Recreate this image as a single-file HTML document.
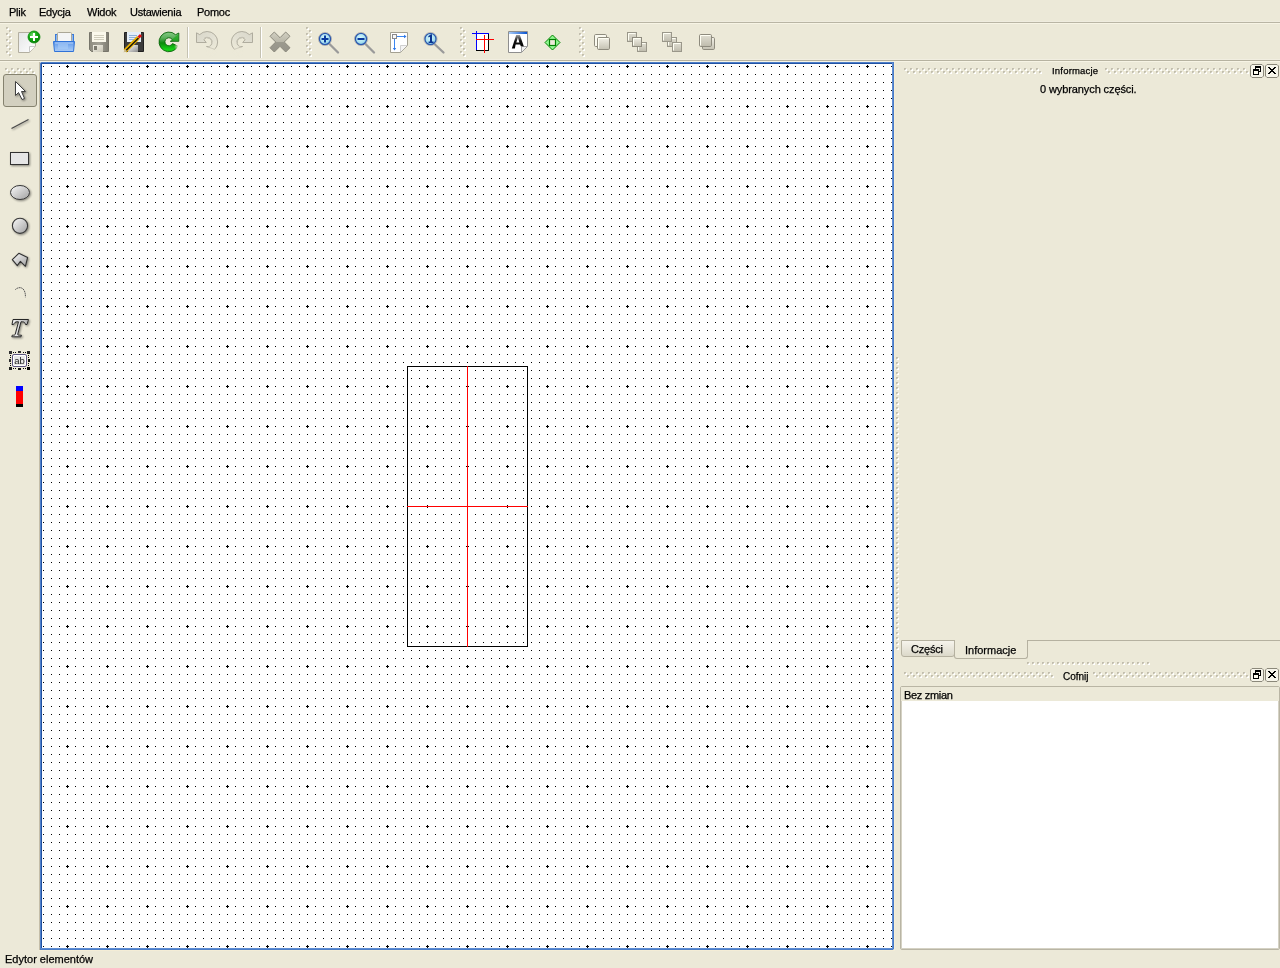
<!DOCTYPE html>
<html><head><meta charset="utf-8">
<style>
html,body{margin:0;padding:0;}
body{width:1280px;height:968px;overflow:hidden;background:#ECE9D8;position:relative;font-family:"Liberation Sans",sans-serif;font-size:11px;color:#000;}
.a{position:absolute;}
.t{position:absolute;white-space:nowrap;line-height:13px;will-change:transform;-webkit-text-stroke:0.25px #000;}
.m{letter-spacing:-0.25px;}
.dbtn{position:absolute;width:12px;height:12px;border:1px solid #8D8A7C;border-radius:3px;background:linear-gradient(#FFFEF6,#F1EFE3);}
.tab1{box-sizing:border-box;border:1px solid #B5B1A0;border-top-color:#B5B1A0;border-radius:0 0 3px 3px;background:linear-gradient(#F6F4EC,#DCD9CA);}
.tab2{box-sizing:border-box;border:1px solid #B5B1A0;border-top:none;border-radius:0 0 3px 3px;background:#ECE9D8;}
.list{border:1px solid #B5B1A0;border-radius:2px;background:#fff;}
svg{position:absolute;overflow:visible;}
</style></head><body>

<!-- menu -->
<div class="t m" style="left:9px;top:6px;">Plik</div>
<div class="t m" style="left:39px;top:6px;">Edycja</div>
<div class="t m" style="left:87px;top:6px;">Widok</div>
<div class="t m" style="left:130px;top:6px;">Ustawienia</div>
<div class="t m" style="left:197px;top:6px;">Pomoc</div>
<div class="a" style="left:0;top:21px;width:1280px;height:1px;background:#EFECDF"></div>
<div class="a" style="left:0;top:22px;width:1280px;height:1px;background:#B9B5A4"></div>
<div class="a" style="left:0;top:23px;width:1280px;height:1px;background:#F7F4E5"></div>
<!-- toolbar bottom -->
<div class="a" style="left:0;top:59px;width:1280px;height:1px;background:#F1EEE1"></div>
<div class="a" style="left:0;top:60px;width:1280px;height:1px;background:#B6B2A0"></div>
<div class="a" style="left:0;top:61px;width:1280px;height:1px;background:#F7F4E5"></div>

<!-- canvas -->
<svg width="1280" height="968" style="left:0;top:0" shape-rendering="crispEdges">
<defs>
<pattern id="dots" patternUnits="userSpaceOnUse" x="43" y="66" width="8" height="8"><rect x="0" y="0" width="1" height="1" fill="#000"/></pattern>
<pattern id="cross" patternUnits="userSpaceOnUse" x="66" y="65" width="40" height="40"><rect x="0" y="1" width="3" height="1" fill="#000"/><rect x="1" y="0" width="1" height="3" fill="#000"/></pattern>
</defs>
<rect x="39" y="62" width="1" height="888" fill="#C5BEA8"/>
<rect x="40" y="62" width="854" height="888" fill="#4A7CC8"/>
<rect x="41" y="63" width="852" height="886" fill="#5E8CD2"/>
<rect x="40" y="62" width="853" height="1" fill="#4F80CA"/>
<rect x="40" y="62" width="1" height="887" fill="#4F80CA"/>
<rect x="41" y="63" width="851" height="1" fill="#2152A3"/>
<rect x="41" y="63" width="1" height="885" fill="#2152A3"/>
<rect x="40" y="62" width="1" height="1" fill="#B8C6DC"/>
<rect x="893" y="949" width="1" height="1" fill="#B8C6DC"/>
<rect x="894" y="62" width="1" height="889" fill="#F4EDD6"/>
<rect x="39" y="950" width="856" height="1" fill="#F4EDD6"/>
<rect x="42" y="64" width="850" height="884" fill="#fff"/>
<rect x="42" y="64" width="850" height="884" fill="url(#dots)"/>
<rect x="42" y="64" width="850" height="884" fill="url(#cross)"/>
<!-- element -->
<rect x="407" y="366" width="121" height="1" fill="#000"/>
<rect x="407" y="646" width="121" height="1" fill="#000"/>
<rect x="407" y="366" width="1" height="281" fill="#000"/>
<rect x="527" y="366" width="1" height="281" fill="#000"/>
<rect x="467" y="366" width="1" height="281" fill="#f00"/>
<rect x="407" y="506" width="121" height="1" fill="#f00"/>
</svg>


<!-- grips -->
<svg width="0" height="0" style="left:0;top:0">
<defs>
<pattern id="g6" patternUnits="userSpaceOnUse" x="0" y="0" width="6" height="6"><rect x="0" y="0" width="2" height="2" fill="#C2BEAE"/><rect x="1" y="1" width="2" height="2" fill="#fff"/><rect x="1" y="1" width="1" height="1" fill="#DCD9CC"/><rect x="3" y="3" width="2" height="2" fill="#C2BEAE"/><rect x="4" y="4" width="2" height="2" fill="#fff"/><rect x="4" y="4" width="1" height="1" fill="#DCD9CC"/></pattern>
<pattern id="g5v" patternUnits="userSpaceOnUse" x="0" y="0" width="3" height="5"><rect x="0" y="0" width="2" height="2" fill="#C2BEAE"/><rect x="1" y="1" width="2" height="2" fill="#fff"/><rect x="1" y="1" width="1" height="1" fill="#DCD9CC"/></pattern>
<pattern id="g5h" patternUnits="userSpaceOnUse" x="0" y="0" width="5" height="3"><rect x="0" y="0" width="2" height="2" fill="#C2BEAE"/><rect x="1" y="1" width="2" height="2" fill="#fff"/><rect x="1" y="1" width="1" height="1" fill="#DCD9CC"/></pattern>
</defs></svg>
<svg style="left:6px;top:27px" width="6" height="30" shape-rendering="crispEdges"><rect width="6" height="30" fill="url(#g6)"/></svg>
<svg style="left:306px;top:27px" width="6" height="30" shape-rendering="crispEdges"><rect width="6" height="30" fill="url(#g6)"/></svg>
<svg style="left:460px;top:27px" width="6" height="30" shape-rendering="crispEdges"><rect width="6" height="30" fill="url(#g6)"/></svg>
<svg style="left:579px;top:27px" width="6" height="30" shape-rendering="crispEdges"><rect width="6" height="30" fill="url(#g6)"/></svg>
<svg style="left:5px;top:68px" width="30" height="6" shape-rendering="crispEdges"><rect width="30" height="6" fill="url(#g6)"/></svg>
<!-- toolbar separators -->
<div class="a" style="left:187px;top:27px;width:1px;height:31px;background:#C5C2B2"></div>
<div class="a" style="left:188px;top:27px;width:1px;height:31px;background:#fff"></div>
<div class="a" style="left:260px;top:27px;width:1px;height:31px;background:#C5C2B2"></div>
<div class="a" style="left:261px;top:27px;width:1px;height:31px;background:#fff"></div>

<!-- vertical splitter grip -->
<svg style="left:896px;top:357px" width="3" height="293" shape-rendering="crispEdges"><rect width="3" height="293" fill="url(#g5v)"/></svg>

<!-- dock Informacje -->
<svg style="left:904px;top:68px" width="138" height="6" shape-rendering="crispEdges"><rect width="138" height="6" fill="url(#g6)"/></svg>
<svg style="left:1105px;top:68px" width="144" height="6" shape-rendering="crispEdges"><rect width="144" height="6" fill="url(#g6)"/></svg>
<div class="t" style="left:1052px;top:64px;font-size:9.5px;letter-spacing:0.2px;">Informacje</div>
<div class="t" style="left:1040px;top:83px;letter-spacing:-0.1px;">0 wybranych części.</div>
<svg width="30" height="14" style="left:1250px;top:64px" shape-rendering="crispEdges"><path d="M2,0.5 H12 L13.5,2 V12 L12,13.5 H2 L0.5,12 V2 Z" fill="#F7F5EA" stroke="#8B887A" stroke-width="1" shape-rendering="geometricPrecision"/><path d="M17,0.5 H27 L28.5,2 V12 L27,13.5 H17 L15.5,12 V2 Z" fill="#F7F5EA" stroke="#8B887A" stroke-width="1" shape-rendering="geometricPrecision"/><rect x="5" y="2" width="6" height="2" fill="#000"/><rect x="5" y="2" width="1" height="3" fill="#000"/><rect x="10" y="2" width="1" height="6" fill="#000"/><rect x="8" y="7" width="3" height="1" fill="#000"/><rect x="3" y="5" width="6" height="2" fill="#000"/><rect x="3" y="5" width="1" height="6" fill="#000"/><rect x="8" y="5" width="1" height="6" fill="#000"/><rect x="3" y="10" width="6" height="1" fill="#000"/><rect x="4" y="7" width="4" height="3" fill="#FFFDF0"/><rect x="18" y="3" width="1" height="1" fill="#000"/><rect x="19" y="3" width="1" height="1" fill="#000"/><rect x="24" y="3" width="1" height="1" fill="#000"/><rect x="25" y="3" width="1" height="1" fill="#000"/><rect x="19" y="4" width="1" height="1" fill="#000"/><rect x="20" y="4" width="1" height="1" fill="#000"/><rect x="23" y="4" width="1" height="1" fill="#000"/><rect x="24" y="4" width="1" height="1" fill="#000"/><rect x="20" y="5" width="1" height="1" fill="#000"/><rect x="21" y="5" width="1" height="1" fill="#000"/><rect x="22" y="5" width="1" height="1" fill="#000"/><rect x="23" y="5" width="1" height="1" fill="#000"/><rect x="21" y="6" width="1" height="1" fill="#000"/><rect x="22" y="6" width="1" height="1" fill="#000"/><rect x="20" y="7" width="1" height="1" fill="#000"/><rect x="21" y="7" width="1" height="1" fill="#000"/><rect x="22" y="7" width="1" height="1" fill="#000"/><rect x="23" y="7" width="1" height="1" fill="#000"/><rect x="19" y="8" width="1" height="1" fill="#000"/><rect x="20" y="8" width="1" height="1" fill="#000"/><rect x="23" y="8" width="1" height="1" fill="#000"/><rect x="24" y="8" width="1" height="1" fill="#000"/><rect x="18" y="9" width="1" height="1" fill="#000"/><rect x="19" y="9" width="1" height="1" fill="#000"/><rect x="24" y="9" width="1" height="1" fill="#000"/><rect x="25" y="9" width="1" height="1" fill="#000"/></svg>

<!-- tabs -->
<div class="a" style="left:1028px;top:640px;width:252px;height:1px;background:#B5B1A0"></div>
<div class="a tab1" style="left:901px;top:640px;width:54px;height:17px;"></div>
<div class="a tab2" style="left:954px;top:640px;width:74px;height:19px;"></div>
<div class="t" style="left:911px;top:643px;letter-spacing:-0.2px;">Części</div>
<div class="t" style="left:965px;top:644px;">Informacje</div>

<!-- horizontal splitter grip -->
<svg style="left:1027px;top:662px" width="123" height="3" shape-rendering="crispEdges"><rect width="123" height="3" fill="url(#g5h)"/></svg>

<!-- dock Cofnij -->
<svg style="left:904px;top:672px" width="150" height="6" shape-rendering="crispEdges"><rect width="150" height="6" fill="url(#g6)"/></svg>
<svg style="left:1093px;top:672px" width="156" height="6" shape-rendering="crispEdges"><rect width="156" height="6" fill="url(#g6)"/></svg>
<div class="t" style="left:1063px;top:670px;font-size:10px;">Cofnij</div>
<svg width="30" height="14" style="left:1250px;top:668px" shape-rendering="crispEdges"><path d="M2,0.5 H12 L13.5,2 V12 L12,13.5 H2 L0.5,12 V2 Z" fill="#F7F5EA" stroke="#8B887A" stroke-width="1" shape-rendering="geometricPrecision"/><path d="M17,0.5 H27 L28.5,2 V12 L27,13.5 H17 L15.5,12 V2 Z" fill="#F7F5EA" stroke="#8B887A" stroke-width="1" shape-rendering="geometricPrecision"/><rect x="5" y="2" width="6" height="2" fill="#000"/><rect x="5" y="2" width="1" height="3" fill="#000"/><rect x="10" y="2" width="1" height="6" fill="#000"/><rect x="8" y="7" width="3" height="1" fill="#000"/><rect x="3" y="5" width="6" height="2" fill="#000"/><rect x="3" y="5" width="1" height="6" fill="#000"/><rect x="8" y="5" width="1" height="6" fill="#000"/><rect x="3" y="10" width="6" height="1" fill="#000"/><rect x="4" y="7" width="4" height="3" fill="#FFFDF0"/><rect x="18" y="3" width="1" height="1" fill="#000"/><rect x="19" y="3" width="1" height="1" fill="#000"/><rect x="24" y="3" width="1" height="1" fill="#000"/><rect x="25" y="3" width="1" height="1" fill="#000"/><rect x="19" y="4" width="1" height="1" fill="#000"/><rect x="20" y="4" width="1" height="1" fill="#000"/><rect x="23" y="4" width="1" height="1" fill="#000"/><rect x="24" y="4" width="1" height="1" fill="#000"/><rect x="20" y="5" width="1" height="1" fill="#000"/><rect x="21" y="5" width="1" height="1" fill="#000"/><rect x="22" y="5" width="1" height="1" fill="#000"/><rect x="23" y="5" width="1" height="1" fill="#000"/><rect x="21" y="6" width="1" height="1" fill="#000"/><rect x="22" y="6" width="1" height="1" fill="#000"/><rect x="20" y="7" width="1" height="1" fill="#000"/><rect x="21" y="7" width="1" height="1" fill="#000"/><rect x="22" y="7" width="1" height="1" fill="#000"/><rect x="23" y="7" width="1" height="1" fill="#000"/><rect x="19" y="8" width="1" height="1" fill="#000"/><rect x="20" y="8" width="1" height="1" fill="#000"/><rect x="23" y="8" width="1" height="1" fill="#000"/><rect x="24" y="8" width="1" height="1" fill="#000"/><rect x="18" y="9" width="1" height="1" fill="#000"/><rect x="19" y="9" width="1" height="1" fill="#000"/><rect x="24" y="9" width="1" height="1" fill="#000"/><rect x="25" y="9" width="1" height="1" fill="#000"/></svg>
<div class="a" style="left:900px;top:686px;width:378px;height:262px;border:1px solid #B9B5A4;border-radius:2px;background:#fff;"></div>
<div class="a" style="left:901px;top:687px;width:1px;height:262px;background:#D5D2C4"></div>
<div class="a" style="left:1278px;top:687px;width:1px;height:262px;background:#D5D2C4"></div>
<div class="a" style="left:901px;top:948px;width:378px;height:1px;background:#D5D2C4"></div>
<div class="a" style="left:901px;top:687px;width:378px;height:14px;background:#ECE9D8"></div>
<div class="t" style="left:904px;top:689px;letter-spacing:-0.3px;">Bez zmian</div>

<!-- icons -->
<svg width="1280" height="968" style="left:0;top:0">
<defs>
<linearGradient id="pg" x1="0" y1="0" x2="1" y2="1"><stop offset="0" stop-color="#E4E5E6"/><stop offset="1" stop-color="#FFFFFF"/></linearGradient>
<radialGradient id="gc" cx="0.4" cy="0.35" r="0.7"><stop offset="0" stop-color="#7FE07F"/><stop offset="0.5" stop-color="#10A810"/><stop offset="1" stop-color="#067A06"/></radialGradient>
<linearGradient id="tray" x1="0" y1="0" x2="0" y2="1"><stop offset="0" stop-color="#5C95E8"/><stop offset="0.6" stop-color="#8DB8F2"/><stop offset="1" stop-color="#A9CAF5"/></linearGradient>
<linearGradient id="flop" x1="0" y1="0" x2="1" y2="0"><stop offset="0" stop-color="#8E8C80"/><stop offset="0.5" stop-color="#A3A196"/><stop offset="1" stop-color="#7E7C71"/></linearGradient>
<linearGradient id="shut" x1="0" y1="0" x2="1" y2="1"><stop offset="0" stop-color="#F2F0E6"/><stop offset="1" stop-color="#C9C6B6"/></linearGradient>
<linearGradient id="shut2" x1="0" y1="0" x2="1" y2="1"><stop offset="0" stop-color="#FFFFFF"/><stop offset="1" stop-color="#8A8A8A"/></linearGradient>
<linearGradient id="grn" x1="0" y1="0" x2="0" y2="1"><stop offset="0" stop-color="#8AD08A"/><stop offset="0.55" stop-color="#0E8E0E"/><stop offset="1" stop-color="#10E010"/></linearGradient>
<linearGradient id="gray1" x1="0" y1="0" x2="1" y2="1"><stop offset="0" stop-color="#E6E4D8"/><stop offset="1" stop-color="#CDCABC"/></linearGradient>
<linearGradient id="xg" x1="0" y1="0" x2="0" y2="1"><stop offset="0" stop-color="#D2D0C2"/><stop offset="0.48" stop-color="#BAB8AA"/><stop offset="0.52" stop-color="#9C9A8E"/><stop offset="1" stop-color="#96948A"/></linearGradient>
<radialGradient id="lens" cx="0.45" cy="0.4" r="0.6"><stop offset="0" stop-color="#D8F8FC"/><stop offset="0.7" stop-color="#A8E0F0"/><stop offset="1" stop-color="#7CC0E0"/></radialGradient>
<linearGradient id="hand" x1="0" y1="0" x2="1" y2="0"><stop offset="0" stop-color="#707070"/><stop offset="1" stop-color="#E0E0E0"/></linearGradient>
<linearGradient id="sq" x1="0" y1="0" x2="0" y2="1"><stop offset="0" stop-color="#F4F2E8"/><stop offset="1" stop-color="#C4C1B2"/></linearGradient>
<linearGradient id="sqd" x1="0" y1="0" x2="0" y2="1"><stop offset="0" stop-color="#E2E0D4"/><stop offset="1" stop-color="#BEBBAC"/></linearGradient>
<linearGradient id="titleb" x1="0" y1="0" x2="1" y2="0"><stop offset="0" stop-color="#A8CCF8"/><stop offset="1" stop-color="#0A54D0"/></linearGradient>
</defs>

<!-- New -->
<path d="M18.5,32.5 H35.5 V46 L29.5,52.5 H18.5 Z" fill="url(#pg)" stroke="#B3AFA0" stroke-width="1"/>
<path d="M29.5,52 V46.5 H35" fill="#fff" stroke="#C8C8C8" stroke-width="1"/>
<circle cx="34" cy="37" r="6" fill="url(#gc)" stroke="#0A8A0A" stroke-width="0.8"/>
<rect x="30" y="36" width="8" height="2" fill="#fff"/>
<rect x="33" y="33" width="2" height="8" fill="#fff"/>

<!-- Print -->
<rect x="55.5" y="34.5" width="3" height="8" fill="#8FB8F0" stroke="#3A7AD8" stroke-width="1"/>
<rect x="70.5" y="34.5" width="3" height="8" fill="#8FB8F0" stroke="#3A7AD8" stroke-width="1"/>
<rect x="57.5" y="32.5" width="14" height="9" rx="1" fill="#F4F5F5" stroke="#ABA797" stroke-width="1"/>
<path d="M53.5,41.5 H74.5 L73.5,51.5 H54.5 Z" fill="url(#tray)" stroke="#2F72D8" stroke-width="1"/>
<rect x="55" y="42.5" width="18" height="1" fill="#B8D4F8"/>
<rect x="58" y="44" width="10" height="5" fill="#A8CCF6" opacity="0.6"/>

<!-- Save -->
<path d="M89.5,32.5 H108.5 V51.5 H91.5 L89.5,49.5 Z" fill="url(#flop)" stroke="#77756A" stroke-width="1"/>
<rect x="92" y="32" width="14" height="10" fill="#FBF9EC"/>
<rect x="94" y="35" width="10" height="1" fill="#D0CDBC"/>
<rect x="94" y="37" width="10" height="1" fill="#D0CDBC"/>
<rect x="94" y="39" width="10" height="1" fill="#D0CDBC"/>
<rect x="93" y="45" width="10" height="7" fill="url(#shut)"/>
<rect x="94" y="46" width="3" height="4" fill="#7D7B70"/>

<!-- Save As -->
<path d="M124.5,32.5 H143.5 V51.5 H126.5 L124.5,49.5 Z" fill="#3C3C3C" stroke="#202020" stroke-width="1"/>
<rect x="127" y="32" width="14" height="10" fill="#E4EEF8"/>
<rect x="129" y="35" width="8" height="1" fill="#8FB0D8"/>
<rect x="129" y="37" width="8" height="1" fill="#8FB0D8"/>
<rect x="129" y="39" width="8" height="1" fill="#8FB0D8"/>
<rect x="128" y="45" width="10" height="7" fill="url(#shut2)"/>
<path d="M125,51 L138.5,37.5" stroke="#E8B000" stroke-width="4" stroke-linecap="butt"/>
<path d="M125.5,51 L138.5,38" stroke="#101010" stroke-width="1.3"/>
<path d="M137.5,36.5 L140,34 L142,36 L139.5,38.5 Z" fill="#E01010"/>
<path d="M123.5,52.5 L125,49 L127,51 Z" fill="#C8B890"/>

<!-- Reload -->
<defs>
<linearGradient id="grn2" gradientUnits="userSpaceOnUse" x1="0" y1="32" x2="0" y2="52"><stop offset="0" stop-color="#86CC86"/><stop offset="0.3" stop-color="#5AAE5A"/><stop offset="0.55" stop-color="#0A8A0A"/><stop offset="0.9" stop-color="#16D816"/><stop offset="1" stop-color="#109810"/></linearGradient>
<radialGradient id="fade" gradientUnits="userSpaceOnUse" cx="178.5" cy="46.5" r="4.5"><stop offset="0" stop-color="#ECE9D8" stop-opacity="1"/><stop offset="1" stop-color="#ECE9D8" stop-opacity="0"/></radialGradient>
</defs>
<path d="M175.6,34.7 L178.8,33 L178.8,41.3 L170.3,41.3 L172.7,40.4 A4,4 0 1 0 172.5,43.6 L177.8,46.1 A9.85,9.85 0 1 1 175.6,34.7 Z" fill="url(#grn2)" stroke="#0A640A" stroke-width="0.9" stroke-linejoin="round"/>
<path d="M170.8,40.8 L178.3,40.8 L178.3,34 Z" fill="#1DA81D" opacity="0.7"/>
<circle cx="178.5" cy="46.5" r="4.5" fill="url(#fade)"/>
<!-- Undo (disabled) -->
<defs>
<linearGradient id="ug" gradientUnits="userSpaceOnUse" x1="196" y1="31" x2="214" y2="50"><stop offset="0" stop-color="#D8D6C8"/><stop offset="0.6" stop-color="#E2E0D3"/><stop offset="1" stop-color="#ECE9D8"/></linearGradient>
<radialGradient id="ufade" gradientUnits="userSpaceOnUse" cx="211" cy="51" r="6"><stop offset="0" stop-color="#ECE9D8" stop-opacity="1"/><stop offset="1" stop-color="#ECE9D8" stop-opacity="0"/></radialGradient>
</defs>
<g id="undo">
<path d="M196.5,32.8 L199.7,34.6 A10.5,10.5 0 1 1 214.6,49.4 L206.5,46.5 A4.5,4.5 0 1 0 203.8,39.6 L206.3,42.5 L196.5,42.5 Z" fill="url(#ug)" stroke="#AFAC9E" stroke-width="1" stroke-linejoin="round"/>
<path d="M204.5,38.2 A5,5 0 0 1 212,42" fill="none" stroke="#C4C1B3" stroke-width="1.2"/>
<circle cx="211" cy="51" r="6" fill="url(#ufade)"/>
</g>
<use href="#undo" transform="translate(449,0) scale(-1,1)"/>
<!-- Delete -->
<path d="M270,36.3 L274.3,32 L280,37.7 L285.7,32 L290,36.3 L284.3,42 L290,47.7 L285.7,52 L280,46.3 L274.3,52 L270,47.7 L275.7,42 Z" fill="url(#xg)" stroke="#8A887C" stroke-width="1"/>

<!-- Zoom in -->
<path d="M329.5,44 L338,52.5" stroke="#9A9A9A" stroke-width="2.3" stroke-linecap="round"/>

<circle cx="325" cy="39" r="5.6" fill="url(#lens)" stroke="#2A58B0" stroke-width="1.4"/>
<circle cx="325" cy="39" r="6.6" fill="none" stroke="#A0A0A0" stroke-width="0.6"/>
<rect x="321.5" y="38" width="7" height="2" fill="#0A3AA0"/>
<rect x="324" y="35.5" width="2" height="7" fill="#0A3AA0"/>

<!-- Zoom out -->
<path d="M365.5,44 L374,52.5" stroke="#9A9A9A" stroke-width="2.3" stroke-linecap="round"/>

<circle cx="361" cy="39" r="5.6" fill="url(#lens)" stroke="#2A58B0" stroke-width="1.4"/>
<circle cx="361" cy="39" r="6.6" fill="none" stroke="#A0A0A0" stroke-width="0.6"/>
<rect x="357.5" y="38" width="7" height="2" fill="#0A3AA0"/>

<!-- Fit page -->
<path d="M390.5,32.5 H407.5 V45.5 L400.5,52.5 H390.5 Z" fill="#fff" stroke="#A3A091" stroke-width="1"/>
<path d="M400.5,52 V45.5 H407" fill="#F4F4F4" stroke="#CFCFCF" stroke-width="1"/>
<rect x="392.5" y="34.5" width="4" height="4" fill="#F8F8F8" stroke="#8A8A8A" stroke-width="1"/>
<path d="M397,36.5 H405" stroke="#3A86F0" stroke-width="1"/>
<path d="M404,34.8 L406.5,36.5 L404,38.2 Z" fill="#2A76E8"/>
<path d="M394.5,39 V49" stroke="#3A86F0" stroke-width="1"/>
<path d="M392.8,48 L394.5,50.5 L396.2,48 Z" fill="#2A76E8"/>

<!-- Zoom 1 -->
<path d="M435,44.5 L443.5,52.5" stroke="#9A9A9A" stroke-width="2.3" stroke-linecap="round"/>

<circle cx="430.5" cy="39" r="5.6" fill="url(#lens)" stroke="#2A58B0" stroke-width="1.4"/>
<circle cx="430.5" cy="39" r="6.6" fill="none" stroke="#A0A0A0" stroke-width="0.6"/>
<path d="M428.2,36.2 L431,34.3 H432 V41.5 H433.5 V43 H428.6 V41.5 H430 V36.8 L428.6,37.6 Z" fill="#0A3490"/>

<!-- Size/hotspot -->
<g shape-rendering="crispEdges">
<rect x="476" y="33" width="13" height="18" fill="#fff"/>
<rect x="488" y="33" width="1" height="18" fill="#000"/>
<rect x="476" y="50" width="13" height="1" fill="#000"/>
<rect x="472" y="33" width="17" height="1" fill="#0000FF"/>
<rect x="476" y="31" width="1" height="19" fill="#0000FF"/>
<rect x="476" y="39" width="18" height="1" fill="#FF0000"/>
<rect x="484" y="35" width="1" height="18" fill="#FF0000"/>
</g>

<!-- Names A -->
<path d="M508.5,31.5 H527.5 V46.5 L521.5,52.5 H508.5 Z" fill="#fff" stroke="#8E8E8E" stroke-width="1"/>
<rect x="509" y="32" width="18" height="2" fill="url(#titleb)"/>
<path d="M521.5,52 V46.5 H527" fill="#F0F0F0" stroke="#A0A0A0" stroke-width="1"/>
<defs><linearGradient id="ag" gradientUnits="userSpaceOnUse" x1="0" y1="35" x2="0" y2="48"><stop offset="0" stop-color="#9A9A9A"/><stop offset="0.45" stop-color="#111"/><stop offset="1" stop-color="#000"/></linearGradient></defs>
<path d="M511.8,48.6 L516.2,35 L519.9,35 L523.8,46.2 L520.8,46.2 L520.1,44.6 L515.6,44.6 L514.9,48.6 Z M516.3,42.6 L519.4,42.6 L517.9,37.6 Z" fill="url(#ag)" fill-rule="evenodd"/>

<!-- green diamond -->
<g shape-rendering="crispEdges">
<path d="M552.5,35 L560,42.5 L552.5,50 L545,42.5 Z" fill="#90F890" stroke="#008000" stroke-width="1" shape-rendering="geometricPrecision"/>
<rect x="549.5" y="39.5" width="6" height="6" fill="#ECE9D8" stroke="#008000" stroke-width="1.2" shape-rendering="geometricPrecision"/>
</g>

<!-- bring to front -->
<rect x="594.5" y="34.5" width="12" height="12" rx="1.2" fill="#FBFAF0" stroke="#8E8B7E" stroke-width="1"/>
<rect x="597.5" y="37.5" width="12" height="12" rx="1.2" fill="url(#sq)" stroke="#8E8B7E" stroke-width="1"/>
<path d="M598.5,48.5 V38.5 H608.5" fill="none" stroke="#FFFFF4" stroke-width="1"/>
<!-- raise -->
<rect x="637.5" y="42.5" width="9" height="9" fill="url(#sqd)" stroke="#9A978A" stroke-width="1"/>
<path d="M638.5,50.5 V43.5 H645.5" fill="none" stroke="#FFFFF4" stroke-width="1"/>
<rect x="627.5" y="32.5" width="9" height="9" fill="url(#sqd)" stroke="#9A978A" stroke-width="1"/>
<path d="M628.5,40.5 V33.5 H635.5" fill="none" stroke="#FFFFF4" stroke-width="1"/>
<rect x="632.5" y="37.5" width="9" height="9" fill="url(#sq)" stroke="#8E8B7E" stroke-width="1"/>
<path d="M633.5,45.5 V38.5 H640.5" fill="none" stroke="#FFFFF4" stroke-width="1"/>
<!-- lower -->
<rect x="667.5" y="37.5" width="9" height="9" fill="url(#sqd)" stroke="#9A978A" stroke-width="1"/>
<path d="M668.5,45.5 V38.5 H675.5" fill="none" stroke="#FFFFF4" stroke-width="1"/>
<rect x="662.5" y="32.5" width="9" height="9" fill="url(#sqd)" stroke="#9A978A" stroke-width="1"/>
<path d="M663.5,40.5 V33.5 H670.5" fill="none" stroke="#FFFFF4" stroke-width="1"/>
<rect x="672.5" y="42.5" width="9" height="9" fill="url(#sqd)" stroke="#9A978A" stroke-width="1"/>
<path d="M673.5,50.5 V43.5 H680.5" fill="none" stroke="#FFFFF4" stroke-width="1"/>
<!-- send to back -->
<rect x="702.5" y="37.5" width="12" height="12" rx="1.2" fill="url(#sq)" stroke="#8E8B7E" stroke-width="1"/>
<rect x="699.5" y="34.5" width="12" height="12" rx="1.2" fill="url(#sqd)" stroke="#8E8B7E" stroke-width="1"/>
<path d="M700.5,45.5 V35.5 H710.5" fill="none" stroke="#FFFFF4" stroke-width="1"/>
</svg>

<div class="a" style="left:3px;top:74px;width:32px;height:31px;border:1px solid #85826F;border-radius:3px;background:#D3D0C0;"></div>
<svg width="40" height="420" style="left:0;top:0">
<defs>
<linearGradient id="shp" x1="0" y1="0" x2="1" y2="1"><stop offset="0" stop-color="#FAFAFA"/><stop offset="1" stop-color="#A0A0A0"/></linearGradient>
<linearGradient id="tg" x1="0" y1="0" x2="1" y2="0"><stop offset="0" stop-color="#F8F8F8"/><stop offset="1" stop-color="#B0B0B0"/></linearGradient>
<filter id="sh" x="-30%" y="-30%" width="160%" height="160%"><feGaussianBlur in="SourceAlpha" stdDeviation="0.8"/><feOffset dx="1" dy="1"/><feComponentTransfer><feFuncA type="linear" slope="0.45"/></feComponentTransfer><feMerge><feMergeNode/><feMergeNode in="SourceGraphic"/></feMerge></filter>
</defs>
<!-- pointer -->
<path d="M15.5,81.5 L15.5,95.5 L18.5,92.5 L22,99.5 L24.5,98.5 L21.5,91.5 L25.5,91.5 Z" fill="#fff" stroke="#404040" stroke-width="1" filter="url(#sh)"/>
<!-- line -->
<path d="M11.5,128.5 L28.5,119.5" stroke="#4A4A4A" stroke-width="1.3" filter="url(#sh)"/>
<!-- rect -->
<rect x="10.5" y="152.5" width="18" height="12" fill="#E6E6E6" stroke="#303030" stroke-width="1" filter="url(#sh)"/>
<!-- ellipse -->
<ellipse cx="20" cy="192.5" rx="9.5" ry="7" fill="url(#shp)" stroke="#383838" stroke-width="1" filter="url(#sh)"/>
<!-- circle -->
<circle cx="20" cy="225.8" r="7.6" fill="url(#shp)" stroke="#383838" stroke-width="1.1" filter="url(#sh)"/>
<!-- polygon -->
<path d="M18.8,253.3 L27.6,257.4 L25.4,266.3 L20.4,261.3 L17.3,265.6 L12.3,259.6 Z" fill="url(#shp)" stroke="#303030" stroke-width="1.1" stroke-linejoin="round" filter="url(#sh)"/>
<!-- arc -->
<path d="M15.3,289.6 C17.5,287.5 20.5,287 22.5,288.5 C24.5,290 25.6,293 25.4,297.3" fill="none" stroke="#555" stroke-width="1" stroke-dasharray="1.5,0.6"/>
<!-- T -->
<path d="M13,319.5 H28.5 L27,324.5 H25.5 C25,322.5 24,321.8 22.5,321.8 H21 L17.8,334 C17.6,335 18.2,335.2 19.5,335.2 H21.5 L21,336.8 H11.8 L12.3,335.2 H13.5 C14.5,335.2 15,335 15.3,334 L18.5,321.8 H17 C15.5,321.8 14.5,322.5 13.5,324.5 H12 Z" fill="url(#tg)" stroke="#282828" stroke-width="1" filter="url(#sh)"/>
<!-- textfield -->
<g shape-rendering="crispEdges">
<rect x="9" y="351" width="3" height="3" fill="#303030"/>
<rect x="27" y="351" width="3" height="3" fill="#202020"/>
<rect x="9" y="367" width="3" height="3" fill="#202020"/>
<rect x="27" y="367" width="3" height="3" fill="#000"/>
<rect x="18" y="351" width="3" height="2" fill="#303030"/>
<rect x="18" y="368" width="3" height="2" fill="#101010"/>
<rect x="9" y="359" width="2" height="3" fill="#303030"/>
<rect x="28" y="359" width="2" height="3" fill="#101010"/>
<rect x="13" y="352" width="1" height="1" fill="#000"/><rect x="15" y="352" width="1" height="1" fill="#000"/>
<rect x="23" y="352" width="1" height="1" fill="#000"/><rect x="25" y="352" width="1" height="1" fill="#000"/>
<rect x="13" y="368" width="1" height="1" fill="#000"/><rect x="15" y="368" width="1" height="1" fill="#000"/>
<rect x="23" y="368" width="1" height="1" fill="#000"/><rect x="25" y="368" width="1" height="1" fill="#000"/>
<rect x="10" y="355" width="1" height="1" fill="#000"/><rect x="10" y="357" width="1" height="1" fill="#000"/>
<rect x="10" y="363" width="1" height="1" fill="#000"/><rect x="10" y="365" width="1" height="1" fill="#000"/>
<rect x="28" y="355" width="1" height="1" fill="#000"/><rect x="28" y="357" width="1" height="1" fill="#000"/>
<rect x="28" y="363" width="1" height="1" fill="#000"/><rect x="28" y="365" width="1" height="1" fill="#000"/>
</g>
<rect x="12.5" y="354.5" width="14" height="12" rx="1.5" fill="#fff" stroke="#5C5480" stroke-width="1"/>
<rect x="14" y="356" width="11" height="9" fill="#E8E8E8"/>
<text x="14.2" y="364" font-family="Liberation Sans" font-size="9.5" fill="#202020">ab</text>
<!-- terminal -->
<g shape-rendering="crispEdges">
<rect x="16" y="386" width="7" height="5" fill="#0000FF"/>
<rect x="16" y="391" width="7" height="13" fill="#FF0000"/>
<rect x="16" y="404" width="7" height="3" fill="#000"/>
</g>
</svg>

<!-- status -->
<div class="t" style="left:5px;top:953px;">Edytor elementów</div>

</body></html>
